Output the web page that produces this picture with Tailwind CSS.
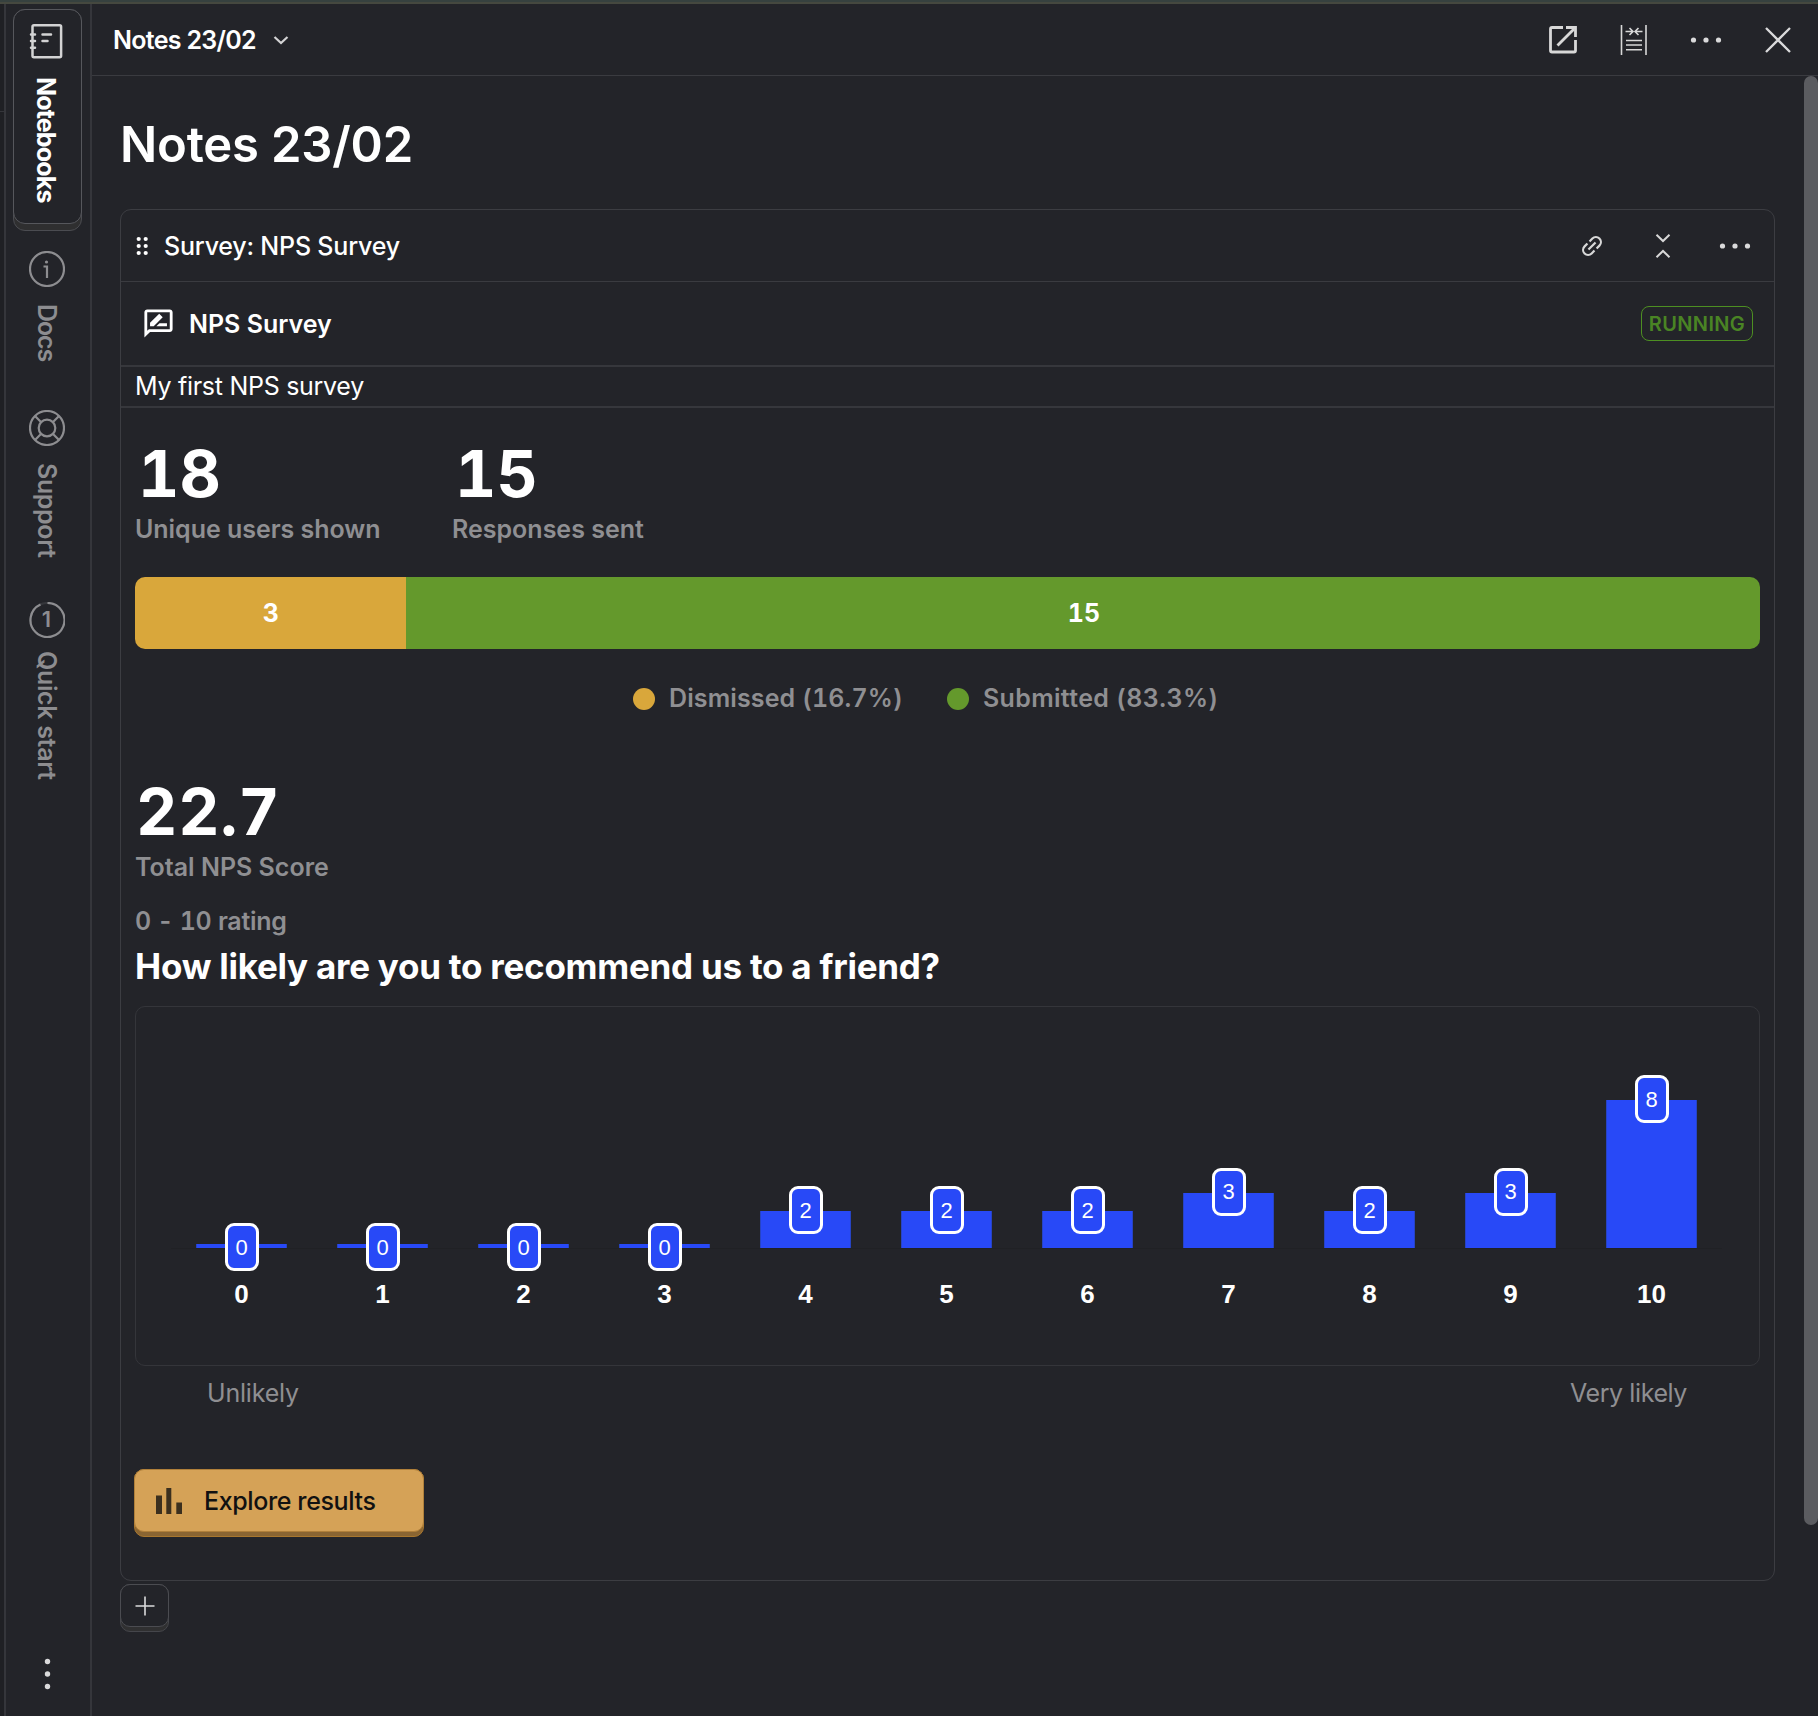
<!DOCTYPE html>
<html lang="en">
<head>
<meta charset="utf-8">
<title>Notes 23/02</title>
<script src="https://cdn.jsdelivr.net/npm/@tailwindcss/browser@4"></script>
</head>
<body class="flex h-[1716px] w-[1818px] flex-col overflow-hidden bg-[#232429] font-['Inter',sans-serif] text-[25px] text-white">
<div class="h-1 shrink-0 border-b-2 border-[#45483f] bg-[#36413f]"></div>
<div class="flex min-h-0 flex-1">
  <!-- Edge of the page behind the side panel -->
  <div class="w-1 shrink-0 bg-[#1f2024]"><div class="h-[108px] border-b border-[#35363b]"></div></div>

  <!-- Side tabs -->
  <nav class="flex w-[88px] shrink-0 flex-col items-center border-x-2 border-[#35363b] pt-[5px] pr-[3px] text-[#8d8d90]">
    <div class="ml-0.5 h-[222px] w-[69px] rounded-[12px] border border-[#4b4c51] bg-[#2f2f30]">
      <div class="-mx-px -mt-px flex h-[215px] flex-col items-center rounded-[12px] border border-[#56575c] bg-[#232429] pt-[13px] pr-[3px] text-white">
        <svg class="h-9 w-9" viewBox="28 23 36 36" fill="none" stroke="#d3d3d4" stroke-width="2.500" stroke-linecap="round"><rect x="32.500" y="25.200" width="28.600" height="32" rx="1.500"/><path d="M31 34.500h4M31 41h4M31 47.800h4M42.500 34.500h8.500M42.500 41h5"/></svg>
        <span class="mt-[18px] text-[25px] leading-8 font-bold tracking-[-0.83px] [writing-mode:vertical-rl]">Notebooks</span>
      </div>
    </div>
    <div class="mt-[20px] flex flex-col items-center">
      <svg class="h-9 w-9" viewBox="29 251 36 36" fill="none" stroke="#8d8d90" stroke-width="2.200"><circle cx="47" cy="269" r="17"/><path d="M43.500 266.500H47V278"/><circle cx="46.500" cy="262" r="1.600" fill="#8d8d90" stroke="none"/></svg>
      <span class="mt-[17px] leading-8 font-semibold tracking-[-1.1px] [writing-mode:vertical-rl]">Docs</span>
    </div>
    <div class="mt-[49px] flex flex-col items-center">
      <svg class="h-9 w-9" viewBox="29 410 36 36" fill="none" stroke="#8d8d90" stroke-width="2.200"><circle cx="47" cy="428" r="17"/><circle cx="47" cy="428" r="8.300"/><path d="M35 416l6.200 6.200M59 416l-6.200 6.200M35 440l6.200-6.200M59 440l-6.200-6.200"/></svg>
      <span class="mt-[17px] leading-8 font-semibold tracking-[-0.35px] [writing-mode:vertical-rl]">Support</span>
    </div>
    <div class="mt-[44px] flex flex-col items-center">
      <div class="relative flex h-9 w-9 items-center justify-center text-[22px] font-semibold">
        <svg class="absolute inset-0 h-9 w-9" viewBox="0 0 36 36" fill="none" stroke-width="2.200"><circle cx="18.500" cy="18" r="17" stroke="#35363b"/><path d="M18.500 1a17 17 0 1 1-7 1.500" stroke="#8d8d90"/></svg>1</div>
      <span class="mt-[13px] leading-8 font-semibold tracking-[-0.35px] [writing-mode:vertical-rl]">Quick start</span>
    </div>
    <svg class="mt-auto mb-[24px] h-9 w-9" viewBox="0 0 36 36" fill="#dadadb"><circle cx="18.500" cy="5.500" r="2.700"/><circle cx="18.500" cy="18" r="2.700"/><circle cx="18.500" cy="30.500" r="2.700"/></svg>
  </nav>

  <main class="flex min-w-0 flex-1 flex-col">
    <header class="flex h-[72px] shrink-0 items-center border-b border-[#3a3b40] pl-[21px] pr-[26px]">
      <span class="pt-0.5 font-semibold tracking-[-0.7px]">Notes 23/02</span>
      <svg class="ml-[15px] h-5 w-5" viewBox="0 0 20 20" fill="none" stroke="#d3d3d4" stroke-width="2.200"><path d="M3.500 7l6.500 6 6.500-6"/></svg>
      <svg class="ml-auto h-8 w-8" viewBox="1547 24 32 32" fill="none" stroke="#d8d8d8" stroke-width="2.800"><path d="M1563 27.500H1552q-1.500 0-1.500 1.500V50.500q0 1.500 1.500 1.500H1574q1.500 0 1.500-1.500V40M1566 27.500h9.500V37"/><path d="M1557.500 45.500L1574 29"/></svg>
      <svg class="ml-[39px] h-8 w-8" viewBox="1618 24 32 32" fill="none" stroke="#d8d8d8" stroke-width="1.600"><path d="M1621.500 25v30M1646 25v30M1626 40.500h16M1626 45h16M1626 49.800h16" /><path d="M1625.500 31.500h7M1629.500 28l3.500 3.500-3.500 3.500M1642.500 31.500h-7M1638.500 28l-3.500 3.500 3.500 3.500"/></svg>
      <svg class="ml-[40px] h-8 w-8" viewBox="0 0 32 32" fill="#dadadb"><circle cx="3.500" cy="16" r="2.600"/><circle cx="16" cy="16" r="2.600"/><circle cx="28.500" cy="16" r="2.600"/></svg>
      <svg class="ml-[42px] h-7 w-7" viewBox="0 0 28 28" fill="none" stroke="#dadadb" stroke-width="2.300"><path d="M2 2l24 24M26 2L2 26"/></svg>
    </header>

    <div class="flex min-h-0 flex-1 justify-between">
      <div class="ml-7 w-[1655px]">
        <h1 class="h-[133px] pt-[39px] text-[49px] leading-[60px] font-semibold tracking-[-0.2px]">Notes 23/02</h1>

        <section class="h-[1372px] rounded-[11px] border border-[#3c3d42]">
          <div class="flex h-[72px] items-center border-b border-[#3a3b40] pr-[23px] pl-[15px]">
            <svg class="h-5 w-3.5" viewBox="0 0 14 20"><g fill="#fff"><circle cx="2.700" cy="3" r="2.100"/><circle cx="9.700" cy="3" r="2.100"/><circle cx="2.700" cy="10" r="2.100"/><circle cx="9.700" cy="10" r="2.100"/><circle cx="2.700" cy="17" r="2.100"/><circle cx="9.700" cy="17" r="2.100"/></g></svg>
            <span class="ml-[14px] pt-0.5 font-medium tracking-[-0.2px]">Survey: NPS Survey</span>
            <svg class="ml-auto h-6 w-6" viewBox="0 0 24 24" fill="none" stroke="#d8d8d8" stroke-width="2.200"><g transform="rotate(-45 12 12)"><path d="M10.500 7H6.500a5 5 0 0 0 0 10h4M13.500 7h4a5 5 0 0 1 0 10h-4M7 12h10"/></g></svg>
            <svg class="ml-[47px] h-6 w-6" viewBox="0 0 24 24" fill="none" stroke="#d8d8d8" stroke-width="2"><path d="M5.500 .800l6.500 6.200 6.500-6.200M5.500 23.200L12 17l6.500 6.200"/></svg>
            <svg class="ml-[44px] h-8 w-8" viewBox="0 0 32 32" fill="#dadadb"><circle cx="3.500" cy="16" r="2.600"/><circle cx="16" cy="16" r="2.600"/><circle cx="28.500" cy="16" r="2.600"/></svg>
          </div>
          <div class="flex h-[85px] items-center border-b-2 border-[#36373c] pr-[21px] pl-[22px]">
            <svg class="h-[31px] w-[31px]" viewBox="2 1 22 22" fill="#fff"><path d="M20 2H4c-1.100 0-2 .900-2 2v18l4-4h14c1.100 0 2-.900 2-2V4c0-1.100-.900-2-2-2zm0 14H5.170L4 17.170V4h16v12z" transform="translate(1 0)"/><path d="M11.500 14h7.500v-2.200h-5.300zM7 14h2.600l6.400-6.400-2.500-2.500L7 11.500z"/></svg>
            <span class="ml-[15px] pt-0.5 font-semibold">NPS Survey</span>
            <span class="ml-auto flex h-[35px] w-[112px] items-center justify-center rounded-[8px] border border-[#4d8f22] text-[20px] font-semibold tracking-[0.36px] text-[#4a8424]">RUNNING</span>
          </div>
          <p class="flex h-[41px] items-center border-b-2 border-[#36373c] pt-px pl-[14px] tracking-[-0.28px]">My first NPS survey</p>

          <div class="px-[14px] pt-[34px]">
            <div class="flex font-semibold text-[#8f8f92]">
              <div class="w-[317px]">
                <div class="pl-[3px] text-[64px] leading-[64px] font-bold text-white tabular-nums">18</div>
                <div class="leading-[46px] tracking-[-0.04px]">Unique users shown</div>
              </div>
              <div>
                <div class="pl-[3px] text-[64px] leading-[64px] font-bold text-white tabular-nums">15</div>
                <div class="leading-[46px]">Responses sent</div>
              </div>
            </div>

            <div class="mt-[25px] flex h-[72px] overflow-hidden rounded-[10px] pt-0 font-bold tabular-nums">
              <div class="flex items-center justify-center bg-[#d9a73b] pt-px pl-px" style="width:16.67%">3</div>
              <div class="flex items-center justify-center bg-[#64992c] pt-px pl-0.5" style="width:83.33%">15</div>
            </div>
            <div class="mt-[34px] flex h-8 items-center pl-[498px] font-semibold text-[#8f8f92] tabular-nums">
              <span class="h-[22px] w-[22px] rounded-full bg-[#d9a73b]"></span>
              <span class="ml-[14px] w-[278px] tracking-[0.12px]">Dismissed (16.7%)</span>
              <span class="h-[22px] w-[22px] rounded-full bg-[#64992c]"></span>
              <span class="ml-[14px] tracking-[0.33px]">Submitted (83.3%)</span>
            </div>

            <div class="mt-[65px] pl-px text-[64px] leading-[64px] font-bold tracking-[0.8px] tabular-nums">22.7</div>
            <div class="leading-[46px] font-semibold text-[#8f8f92]">Total NPS Score</div>
            <div class="mt-[15px] leading-8 font-semibold tracking-[-0.27px] text-[#8f8f92] tabular-nums">0 - 10 rating</div>
            <h2 class="mt-[6px] text-[35px] leading-[46px] font-bold tracking-[-0.25px]">How likely are you to recommend us to a friend?</h2>

            <div id="chart" class="mt-[17px] flex h-[360px] items-end rounded-[10px] border border-[#34353a] pr-[37px] pl-[35px] font-['Liberation_Sans',sans-serif]"></div>
            <div class="mt-[11px] flex justify-between pr-[73px] pl-[72px] leading-8 tracking-[-0.2px] text-[#8f8f92]"><span>Unlikely</span><span class="tracking-[-0.4px]">Very likely</span></div>

            <button class="mt-[60px] -ml-px block h-[68px] w-[290px] rounded-[10px] border border-[#a9772e] bg-[#8a6532]">
              <span class="-mx-px -mt-px mb-[4px] flex h-[63px] items-center rounded-[10px] border border-[#b0803a] bg-[#d5a257] pt-px pl-[21px] text-[#111]">
                <svg class="h-[26px] w-[27px]" viewBox="0 0 27 26" fill="#3b2f1e"><path d="M0 7.500h6V26H0zM10.300 0h5V26h-5zM20.300 14.500h5.700V26h-5.700z"/></svg>
                <span class="ml-[21px] pt-px font-medium tracking-[-0.38px]">Explore results</span>
              </span>
            </button>
          </div>
        </section>

        <div class="mt-[3px] h-12 w-[49px] rounded-[10px] border border-[#45464b] bg-[#303031]">
          <div class="-mx-px -mt-px flex h-[43px] items-center justify-center rounded-[10px] border border-[#4b4c51] bg-[#232429]">
            <svg class="h-5 w-5" viewBox="0 0 20 20" fill="none" stroke="#dadadb" stroke-width="1.600"><path d="M.500 10h19M10 .500v19"/></svg>
          </div>
        </div>
      </div>
      <div class="h-[1449px] w-3.5 rounded-full bg-[#5b5c60]"></div>
    </div>
  </main>
</div>
<script>
const counts = [0, 0, 0, 0, 2, 2, 2, 3, 2, 3, 8];
document.getElementById('chart').innerHTML = counts.map((n, i) => `
  <div class="flex flex-1 flex-col items-center">
    <div class="relative w-[91px] border-x border-[#2744c4] bg-[#2849f7]" style="height:${n ? n * 18.5 : 4.5}px">
      <span class="absolute left-1/2 flex h-12 w-[34px] -translate-x-1/2 items-center justify-center rounded-[9px] border-[3.5px] border-white bg-[#2849f7] text-[22px]" style="bottom:${n * 18.5 - 23}px">${n}</span>
    </div>
    <div class="flex h-[117px] w-full justify-center border-t border-[#202125] pt-[32px] text-[26px] leading-[26px] font-bold">${i}</div>
  </div>`).join('');
</script>
</body>
</html>
